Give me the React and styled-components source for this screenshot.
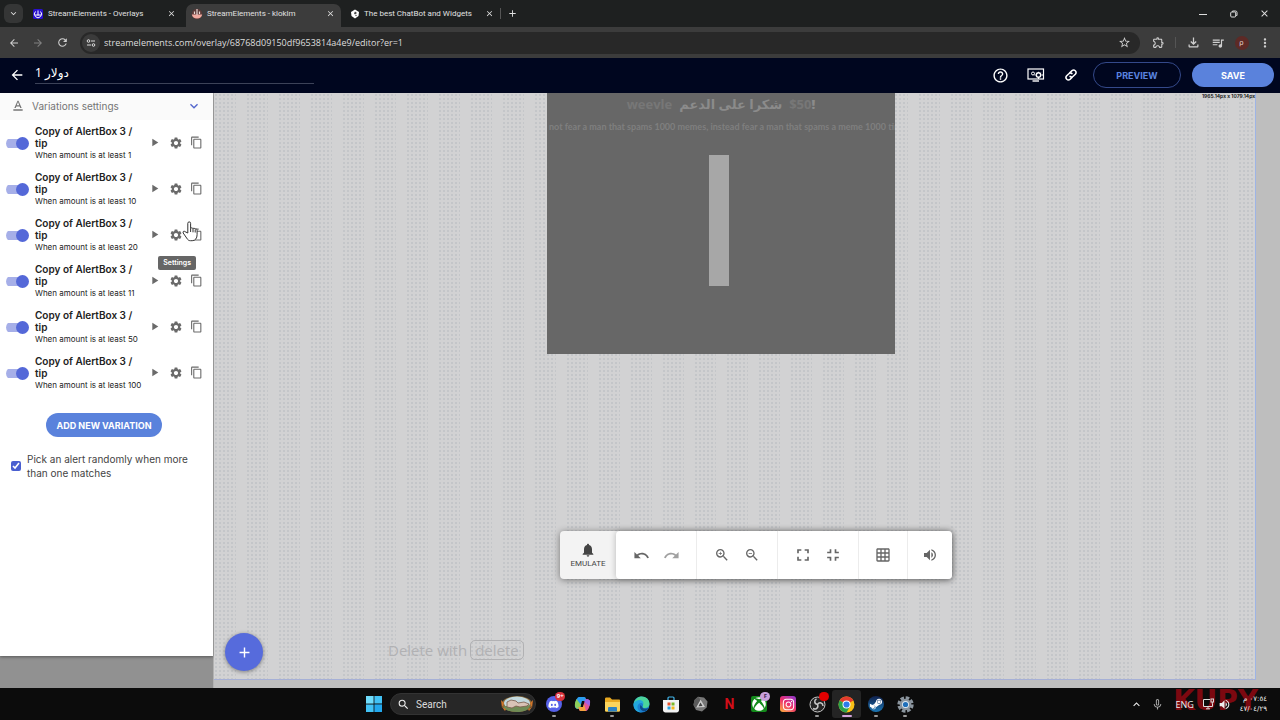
import React from "react";
import styled, { createGlobalStyle, css } from "styled-components";
import {
  MdAdd,
  MdArrowBack,
  MdArrowForward,
  MdClose,
  MdContentCopy,
  MdFullscreen,
  MdFullscreenExit,
  MdGridOn,
  MdHelpOutline,
  MdKeyboardArrowDown,
  MdKeyboardArrowUp,
  MdMicNone,
  MdMoreVert,
  MdNotifications,
  MdOutlineExtension,
  MdOutlineFileDownload,
  MdPlayArrow,
  MdQueueMusic,
  MdRedo,
  MdRefresh,
  MdSearch,
  MdSettings,
  MdStarBorder,
  MdTextFormat,
  MdUndo,
  MdVolumeUp,
  MdZoomIn,
  MdZoomOut,
} from "react-icons/md";
import { FaDiscord, FaInstagram, FaSteamSymbol, FaXbox } from "react-icons/fa";

// Styles

const GlobalStyle = createGlobalStyle`
  * {
    box-sizing: border-box;
  }

  body {
    margin: 0;
    font-family: Inter, "Noto Sans", sans-serif;
    background: #0c0c0c;
  }

  button,
  input {
    margin: 0;
    padding: 0;
    border: 0;
    background: none;
    font: inherit;
    color: inherit;
  }
`;

const Page = styled.div`
  display: flex;
  flex-direction: column;
  min-height: 100vh;
`;

const IconButton = styled.button`
  display: flex;
  flex: none;
  align-items: center;
  justify-content: center;
  width: ${(props) => props.$w || 24}px;
  height: ${(props) => props.$h || 20}px;
  color: ${(props) => props.$color || "inherit"};
`;

// Browser

const TabStrip = styled.div`
  display: flex;
  align-items: flex-end;
  height: 27px;
  padding: 0 0 0 4px;
  background: #1e2020;
  color: #e0e0e0;
  font-family: Roboto, sans-serif;
`;

const TabSearch = styled(IconButton)`
  align-self: center;
  margin-right: 4px;
  border-radius: 6px;
  background: #353636;
`;

const Tab = styled.div`
  display: flex;
  align-items: center;
  width: 155px;
  height: 23px;
  padding: 0 4px 4px 5px;
  border-radius: 7px 7px 0 0;
  font-size: 8px;
  background: ${(props) => (props.$active ? "#3c3c3c" : "transparent")};

  & + & {
    margin-left: 4px;
  }
`;

const TabTitle = styled.button`
  display: flex;
  flex: 1;
  align-items: center;
  gap: 4px;
  min-width: 0;
  overflow: hidden;
  white-space: nowrap;

  svg {
    flex: none;
  }
`;

const Divider = styled.span`
  width: 1px;
  height: 11px;
  background: #555;
`;

const NewTab = styled.div`
  display: flex;
  align-items: center;
  align-self: center;
`;

const WindowControls = styled.div`
  display: flex;
  align-self: center;
  margin-left: auto;
`;

const Toolbar = styled.div`
  display: flex;
  align-items: center;
  height: 31px;
  padding: 0 3px 0 2px;
  background: #3c3c3c;
  color: #cfcfcf;
`;

const AddressBar = styled.div`
  display: flex;
  flex: 1;
  align-items: center;
  height: 22px;
  margin: 0 6px;
  padding: 0 4px 0 2px;
  border-radius: 11px;
  background: #282828;
`;

const SiteInfo = styled(IconButton)`
  border-radius: 9px;
  background: #3b3b3b;
`;

const Address = styled.input`
  flex: 1;
  padding-left: 4px;
  font-family: "Open Sans", sans-serif;
  font-size: 9px;
  color: #dedede;
`;

const Avatar = styled.span`
  width: 14px;
  height: 14px;
  border-radius: 50%;
  background: #5d2a26;
  color: #e8d6d4;
  font-size: 7px;
  line-height: 14px;
  text-align: center;
`;

// Editor header

const Header = styled.header`
  display: flex;
  align-items: center;
  height: 35px;
  padding: 0 6px 1px 5px;
  background: #00061f;
  color: #fff;
`;

const OverlayName = styled.input`
  width: 279px;
  height: 26px;
  margin-left: 6px;
  padding: 5px 0 1px;
  align-self: flex-start;
  border-bottom: 1px solid #3c4258;
  font-family: "Noto Sans", "DejaVu Sans", sans-serif;
  font-size: 12px;
`;

const HeaderActions = styled.div`
  display: flex;
  align-items: center;
  margin-left: auto;
`;

const PillButton = styled.button`
  display: block;
  height: 24px;
  padding: 0 10px;
  border-radius: 13px;
  background: #5a82dc;
  color: #fff;
  font-size: 9px;
  font-weight: 700;
  text-transform: uppercase;
  white-space: nowrap;

  ${(props) =>
    props.$outlined &&
    css`
      width: 88px;
      height: 26px;
      margin: 0 11px 0 5px;
      border: 1px solid #34498a;
      background: none;
      color: #5b84e0;
    `}

  ${(props) =>
    props.$save &&
    css`
      width: 82px;
    `}
`;

// Sidebar

const Body = styled.div`
  display: flex;
  flex: 1;
`;

const SidebarColumn = styled.aside`
  display: flex;
  width: 214px;
  flex: none;
  padding-bottom: 32px;
  border-right: 1px solid #b2b2b2;
  background: #919191;
`;

const Panel = styled.div`
  flex: 1;
  min-width: 0;
  background: #fff;
  box-shadow: 0 1px 3px rgba(0, 0, 0, 0.4);
`;

const PanelHeader = styled.button`
  display: flex;
  align-items: center;
  width: 100%;
  height: 27px;
  padding: 0 11px 2px 10px;
  background: #fafafa;
  color: #757575;
  font-size: 10px;

  span {
    flex: 1;
    padding-left: 6px;
    text-align: left;
  }
`;

const VariationList = styled.ul`
  display: flex;
  flex-direction: column;
  gap: 9px;
  margin: 0;
  padding: 5px 6px 0;
  list-style: none;
`;

const VariationRow = styled.li`
  position: relative;
  display: flex;
  align-items: center;
`;

const RowButton = styled(IconButton)`
  width: 21px;
  padding-bottom: 2px;
  color: #6a6a6a;
`;

const Toggle = styled.input`
  display: flex;
  align-items: center;
  flex: none;
  width: 23px;
  height: 13px;
  appearance: none;
  background: linear-gradient(#a6afe8, #a6afe8) 0 2px / 19px 9px no-repeat;
  border-radius: 7px;

  &::after {
    content: "";
    width: 13px;
    height: 13px;
    margin-left: auto;
    border-radius: 50%;
    background: #5468d8;
  }
`;

const VariationText = styled.label`
  flex: 1;
  min-width: 0;
  padding-left: 6px;
  color: #222;
  font-size: 10px;
  font-weight: 600;
  line-height: 12px;
  white-space: nowrap;

  small {
    display: block;
    font-size: 8px;
    font-weight: 400;
    line-height: 13px;
  }
`;

const Tooltip = styled.div`
  position: absolute;
  top: 39px;
  right: 11px;
  z-index: 2;
  padding: 0 5px;
  border-radius: 2px;
  background: #666;
  color: #fff;
  font-size: 7px;
  font-weight: 600;
  line-height: 14px;
`;

const Pointer = styled.svg`
  position: absolute;
  top: 4px;
  right: 9px;
  z-index: 3;
`;

const PanelFooter = styled.div`
  display: flex;
  flex-direction: column;
  align-items: center;
  gap: 15px;
  padding: 21px 10px 0 5px;
`;

const RandomPick = styled.label`
  display: flex;
  align-items: center;
  gap: 6px;
  width: 100%;
  padding-left: 6px;
  color: #444;
  font-size: 10px;
  line-height: 14px;

  input {
    flex: none;
    width: 10px;
    height: 10px;
    accent-color: #4a5fd0;
  }
`;

// Canvas

const Workspace = styled.main`
  position: relative;
  display: flex;
  flex: 1;
  padding: 0 24px 8px 0;
  background: #bebebe;
`;

const Artboard = styled.div`
  flex: 1;
  border-right: 1px solid #9db4e6;
  border-bottom: 1px solid #a6b0d6;
  background:
    linear-gradient(90deg, transparent 22px, #d2d2d3 22px) 0 0 / 32px 32px,
    radial-gradient(circle at 2px 2px, #c4c6c9 1px, transparent 1px) 0 0 / 4px
      4px,
    #d2d2d3;
`;

const SizeLabel = styled.span`
  display: block;
  text-align: right;
  color: #111;
  font-size: 5px;
  font-weight: 600;
  line-height: 7px;
`;

const AlertWidget = styled.div`
  position: absolute;
  top: 0;
  left: 333px;
  width: 348px;
  height: 261px;
  overflow: hidden;
  background: #676767;
`;

const AlertTitle = styled.div`
  display: flex;
  justify-content: center;
  gap: 7px;
  color: #777;
  font-family: "Open Sans", "DejaVu Sans", sans-serif;
  font-size: 13px;
  font-weight: 700;
  line-height: 22px;
  white-space: nowrap;

  b {
    color: #8b8b8b;
  }
`;

const AlertMessage = styled.div`
  padding-left: 2px;
  color: #7f7f7f;
  font-family: Lato, sans-serif;
  font-size: 9px;
  font-weight: 700;
  line-height: 24px;
  white-space: nowrap;
`;

const AlertImage = styled.div`
  width: 20px;
  height: 131px;
  margin: 16px 0 0 162px;
  background: #a7a7a7;
`;

const DeleteHint = styled.div`
  position: absolute;
  bottom: 28px;
  left: 174px;
  color: #b1b1b3;
  font-family: "Open Sans", sans-serif;
  font-size: 15px;
  line-height: 20px;

  kbd {
    display: inline-block;
    margin-left: 3px;
    padding: 0 4px;
    border: 1px solid #b1b1b3;
    border-radius: 5px;
    font: inherit;
    line-height: 18px;
  }
`;

const AddWidget = styled.button`
  position: absolute;
  bottom: 17px;
  left: 11px;
  display: flex;
  align-items: center;
  justify-content: center;
  width: 38px;
  height: 38px;
  border-radius: 50%;
  background: #566bdc;
  color: #fff;
  box-shadow: 0 1px 4px rgba(0, 0, 0, 0.4);
`;

const Dock = styled.div`
  position: absolute;
  bottom: 109px;
  left: 346px;
  display: flex;
  height: 48px;
  border-radius: 4px;
  background: #f3f3f3;
  color: #666;
  box-shadow: 0 1px 7px rgba(0, 0, 0, 0.45);
`;

const Emulate = styled.button`
  display: flex;
  flex-direction: column;
  align-items: center;
  justify-content: center;
  gap: 1px;
  width: 56px;
  color: #444;
  font-family: Roboto, sans-serif;
  font-size: 8px;
`;

const DockTools = styled.div`
  display: flex;
  border-radius: 4px;
  background: #fff;
  box-shadow: 0 0 6px rgba(0, 0, 0, 0.25);
`;

const DockGroup = styled.div`
  display: flex;
  align-items: center;
  padding: 0 ${(props) => props.$pad || 10}px;

  & + & {
    border-left: 1px solid #ececec;
  }
`;

// Taskbar

const Taskbar = styled.footer`
  position: relative;
  display: grid;
  grid-template-columns: 1fr auto 1fr;
  align-items: center;
  height: 32px;
  overflow: hidden;
  background: #0c0c0c;
  color: #eee;
  font-family: "Open Sans", "DejaVu Sans", sans-serif;
`;

const TaskbarCenter = styled.div`
  grid-column: 2;
  display: flex;
  align-items: center;
  padding-left: 2px;
`;

const SearchBox = styled.label`
  display: flex;
  align-items: center;
  gap: 6px;
  width: 146px;
  height: 22px;
  margin-left: 4px;
  padding: 0 1px 0 6px;
  border: 1px solid #333;
  border-radius: 11px;
  background: #272727;

  input {
    flex: 1;
    min-width: 0;
    font-family: Roboto, sans-serif;
    font-size: 10px;
  }

  input::placeholder {
    color: #ddd;
    opacity: 1;
  }
`;

const Apps = styled.div`
  display: grid;
  grid-template-columns: repeat(13, 1fr);
  width: 381px;
  margin-left: 3px;
`;

const AppButton = styled.button`
  position: relative;
  display: flex;
  align-items: center;
  justify-content: center;
  height: 28px;
  border-radius: 3px;
  background: ${(props) => (props.$active ? "#242424" : "transparent")};

  &::after {
    content: "";
    position: absolute;
    bottom: 1px;
    width: ${(props) => (props.$active ? 10 : 4)}px;
    height: 2px;
    border-radius: 1px;
    background: ${(props) =>
      props.$active ? "#d3a5dc" : props.$running ? "#999" : "transparent"};
  }
`;

const Badge = styled.span`
  position: absolute;
  top: 2px;
  right: 3px;
  min-width: 10px;
  height: 9px;
  border-radius: 5px;
  background: ${(props) => props.$color};
  color: ${(props) => (props.$dark ? "#402050" : "#fff")};
  font-size: 6px;
  font-weight: 700;
  line-height: 9px;
  text-align: center;
`;

const Tile = styled.span`
  display: flex;
  align-items: center;
  justify-content: center;
  width: 16px;
  height: 16px;
  border-radius: ${(props) => props.$radius || 2}px;
  background: ${(props) => props.$bg};
  color: #fff;
`;

const NetflixMark = styled.span`
  color: #d40d18;
  font-family: "Liberation Sans Narrow", Roboto, sans-serif;
  font-size: 14px;
  font-weight: 700;
`;

const Tray = styled.div`
  position: relative;
  z-index: 0;
  display: flex;
  align-items: center;
  justify-content: flex-end;
  padding-right: 13px;
  font-size: 9px;
`;

const Clock = styled.time`
  margin-left: 7px;
  font-family: "DejaVu Sans", sans-serif;
  font-size: 7px;
  line-height: 10px;
  text-align: right;
`;

const Watermark = styled.span`
  position: absolute;
  top: -7px;
  right: 22px;
  z-index: -1;
  color: #7c0810;
  font-family: "DejaVu Sans", sans-serif;
  font-size: 28px;
  font-weight: 700;
  line-height: 28px;
`;

// Drawings

const SeLogo = ({ red }) => (
  <svg width="12" height="12" viewBox="0 0 12 12">
    {red ? (
      <>
        <circle cx="6" cy="6" r="5.3" fill="#5c3a38" />
        <path d="M.8 6.500h10.400a5.300 5 0 0 1-10.400 0z" fill="#f0aaa0" />
        <path
          d="M6 1v6M3.500 3.500v2.500M8.500 3.500v2.500"
          stroke="#e8d8d5"
          strokeWidth="1.200"
        />
      </>
    ) : (
      <>
        <rect x="1" y="1" width="10" height="10" rx="1.5" fill="#2a10d0" />
        <path
          d="M6 2.500v5M3.500 3.500a3.600 3.600 0 1 0 5 0M3 7h6"
          fill="none"
          stroke="#fff"
          strokeWidth="1"
        />
      </>
    )}
  </svg>
);

const BotLogo = () => (
  <svg width="10" height="10" viewBox="0 0 10 10">
    <path d="M5 .5l4 2.500-.5 4L5 9.500 1.500 7 1 3z" fill="#fff" />
    <path d="M5 2.500L7 4 5 5.500 4 4.500z" fill="#444" />
    <circle cx="6" cy="6.500" r=".7" fill="#444" />
  </svg>
);

const TuneIcon = () => (
  <svg width="10" height="8" viewBox="0 0 10 8" fill="none" stroke="#ddd">
    <circle cx="2.500" cy="2" r="1.300" />
    <path d="M5 2h4M1 6h4" />
    <circle cx="7.500" cy="6" r="1.300" />
  </svg>
);

const RestoreIcon = () => (
  <svg width="8" height="8" viewBox="0 0 8 8" fill="none" stroke="#ddd">
    <rect x=".7" y="2" width="5" height="5" rx="1" />
    <path d="M2.500 1.800V1h3a1.500 1.500 0 0 1 1.500 1.500v3h-.8" />
  </svg>
);

const MonitorIcon = () => (
  <svg width="18" height="14" viewBox="0 0 18 14" fill="none" stroke="#fff">
    <rect x="1" y="1" width="15.500" height="10" strokeWidth="1.200" />
    <path d="M5.500 13h6.500" strokeWidth="1.400" />
    <circle cx="6" cy="5.500" r="1.500" />
    <circle cx="11.500" cy="7" r="2.200" strokeWidth="1.400" />
    <path d="M11.500 3.800v1M11.500 9v2M8.500 7h-1M14.500 7h1.500M9.300 4.800l.7.700M13.700 4.800l-.7.700" />
  </svg>
);

const LinkIcon = () => (
  <svg
    width="14"
    height="14"
    viewBox="0 0 14 14"
    fill="none"
    stroke="#fff"
    strokeWidth="1.500"
    strokeLinecap="round"
  >
    <path d="M6 4.500L8 2.600a2.500 2.500 0 0 1 3.500 3.500L9.200 8.300a2.300 2.300 0 0 1-3.200.1" />
    <path d="M8 9.500l-2 1.900a2.500 2.500 0 0 1-3.500-3.500l2.300-2.200a2.300 2.300 0 0 1 3.200-.1" />
  </svg>
);

const HandPointer = () => (
  <Pointer width="16" height="21" viewBox="0 0 16 21">
    <path
      d="M5.800 12V2.300a1.400 1.400 0 0 1 2.800 0v5.200c.3-1 2.200-.9 2.400.3.500-.9 2-.6 2.200.5.700-.6 1.900-.1 1.900 1v4.400c0 3.400-1.700 6-4.900 6H8.500c-1.800 0-2.800-.9-3.800-2.600L1.200 12c-.8-1.500.9-2.400 1.900-1.300z"
      fill="#fff"
      stroke="#333"
    />
    <path d="M8.600 7.500v3.500M11 8v3.300M13.200 8.800v2.700" stroke="#333" />
  </Pointer>
);

const WindowsLogo = () => (
  <svg width="16" height="16" viewBox="0 0 16 16" fill="#42c2f5">
    <path d="M0 0h7.600v7.600H0z" fill="#6fdcfb" />
    <path d="M8.400 0H16v7.600H8.400zM0 8.400h7.600V16H0z" />
    <path d="M8.400 8.400H16V16H8.400z" fill="#22a8ee" />
  </svg>
);

const SearchArt = () => (
  <svg width="34" height="18" viewBox="0 0 34 18">
    <ellipse cx="17" cy="9" rx="15" ry="8" fill="#8a6a3a" />
    <ellipse cx="17" cy="8" rx="13" ry="6.500" fill="#c3d9de" />
    <path
      d="M3 12c5-2 8 0 12-1s9 0 15-1c-1 5-6 7-13 7S5 15 3 12z"
      fill="#6f8b55"
    />
    <path
      d="M7 12V7l4-2 5 1 2 2 6-1 5 2-2 2-7 1-4-1-4 2z"
      fill="#d9c3b6"
      stroke="#7a5a4a"
      strokeWidth=".8"
    />
    <path
      d="M1 5l3 3-2 5zM33 5l-3 3 2 5zM2 12l4 2-1 2zM32 12l-4 2 1 2z"
      fill="#d2762a"
    />
  </svg>
);

const CopilotLogo = () => (
  <svg width="17" height="16" viewBox="0 0 17 16">
    <path
      d="M5 1h5c2 0 2 2 2.500 4H8L6 12c-.5 1.500-4.500 1-5-1C.5 8 2.500 1 5 1z"
      fill="#2b9df0"
    />
    <path
      d="M1 10c-.5-2 .5-5 1.500-7L7 9l-1 3c-1 1.500-4.500 1-5-2z"
      fill="#8ed05a"
    />
    <path
      d="M12 15H7c-2 0-2-2-2.500-4H9l2-7c.5-1.500 4.500-1 5 1 .5 3-1.500 10-4 10z"
      fill="#e0559b"
    />
    <path d="M12 15H7c-2 0-2-2-2.500-4H9l1-3z" fill="#f3a13c" />
    <path
      d="M11 4c.5-1.500 4.500-1 5 1 .2 1 0 3-.5 5L10.500 6z"
      fill="#9a63e8"
    />
  </svg>
);

const FolderLogo = () => (
  <svg width="17" height="15" viewBox="0 0 17 15">
    <path
      d="M1 2c0-1 .4-1.500 1.400-1.500H6L8 2.500h7c.7 0 1 .5 1 1V13c0 1-.5 1.500-1.500 1.500h-12C1.500 14.500 1 14 1 13z"
      fill="#e9a921"
    />
    <path
      d="M1 5h15v8c0 1-.5 1.500-1.500 1.500h-12C1.500 14.500 1 14 1 13z"
      fill="#fbd45c"
    />
    <path
      d="M4 14.500v-3.300c0-.7.400-1.200 1.200-1.200h6.600c.8 0 1.200.5 1.200 1.200v3.300z"
      fill="#2b82c4"
    />
  </svg>
);

const EdgeLogo = () => (
  <svg width="17" height="17" viewBox="0 0 17 17">
    <circle cx="8.500" cy="8.500" r="8" fill="#1a7fd0" />
    <path
      d="M.5 8C1.500 3 5 .5 8.700.5c4.500 0 7.800 3.300 7.800 7 0 3-2 4.500-4.500 4.500-2 0-2.800-.8-2.200-1.800C11 8 9 5.500 6 5.500S1 7 .5 8z"
      fill="#4bd49b"
    />
    <path
      d="M.5 8C1.500 5.500 4 4 6.500 4c3 0 4.500 2.300 3.800 4.500C9 6 5 7 4.500 10.500c-.3 3 2 5.500 4.500 6C4 17 0 13 .5 8z"
      fill="#22a6dc"
    />
    <path
      d="M9.300 11c0 1.500 2.500 2.500 6 1-.5 1.200-1.500 2.500-2.800 3.300C8 15.500 6 12 7.500 9z"
      fill="#0c4a88"
    />
  </svg>
);

const StoreLogo = () => (
  <svg width="16" height="17" viewBox="0 0 16 17">
    <path
      d="M5 4V2c0-.6.400-1 1-1h4c.6 0 1 .4 1 1v2"
      fill="none"
      stroke="#42b5ea"
      strokeWidth="1.200"
    />
    <path
      d="M0 4h16v10c0 1.500-1 2.500-2.500 2.500h-11C1 16.500 0 15.500 0 14z"
      fill="#f2f2f2"
    />
    <path d="M4.500 6.500h3v3h-3z" fill="#e6512a" />
    <path d="M8.500 6.500h3v3h-3z" fill="#7cb829" />
    <path d="M4.500 10.500h3v3h-3z" fill="#28a2e0" />
    <path d="M8.500 10.500h3v3h-3z" fill="#f4b61c" />
  </svg>
);

const CubeLogo = () => (
  <svg width="15" height="16" viewBox="0 0 15 16">
    <path d="M5 .8l6 .7 3.500 4-.8 6L9 15.500 3 14 .5 9 1.500 4z" fill="#777" />
    <path d="M7.500 3.500L12 11 3 11.500z" fill="#ccc" />
    <path d="M7.500 6.500L9.500 10l-4 .3z" fill="#444" />
    <path d="M5 .8L7.500 3.500 3 11.500.5 9 1.500 4z" fill="#5b5b5b" />
  </svg>
);

const ObsLogo = () => (
  <svg width="17" height="17" viewBox="0 0 17 17" fill="none" stroke="#c8c8c8">
    <circle cx="8.500" cy="8.500" r="7.500" fill="#252525" />
    <path
      d="M8.500 8.500C5 8 5 4 7.500 3M8.500 8.500c2-3 5.500-1.500 5.500 1.500M8.500 8.500C10 12 6.500 14 4 12.500"
      strokeWidth="1.500"
    />
  </svg>
);

const ChromeLogo = () => (
  <svg width="17" height="17" viewBox="0 0 17 17">
    <circle cx="8.500" cy="8.500" r="8" fill="#fbc116" />
    <path d="M8.500 8.500L1.600 4.500a8 8 0 0 1 13.800 0z" fill="#e33b2e" />
    <path
      d="M8.500 8.500L1.600 4.500A8 8 0 0 0 8.500 16.500l3.500-6z"
      fill="#2ba24c"
    />
    <circle cx="8.500" cy="8.500" r="4" fill="#fff" />
    <circle cx="8.500" cy="8.500" r="3.100" fill="#2e7bea" />
  </svg>
);

const GearLogo = () => (
  <svg width="17" height="17" viewBox="0 0 17 17">
    <circle
      cx="8.500"
      cy="8.500"
      r="6.700"
      fill="none"
      stroke="#8b959e"
      strokeWidth="3"
      strokeDasharray="3.600 1.660"
    />
    <circle cx="8.500" cy="8.500" r="5.800" fill="#8b959e" />
    <circle cx="8.500" cy="8.500" r="3.500" fill="#dce9f4" />
    <circle cx="8.500" cy="8.500" r="2.600" fill="#1f6fba" />
  </svg>
);

const NetworkIcon = () => (
  <svg width="13" height="12" viewBox="0 0 13 12" fill="none" stroke="#ddd">
    <path d="M8 1.500H1.500v7h9V6M4 10.800h4M6 8.500v2" />
    <rect x="9" y="1" width="2.500" height="3" />
    <path d="M10.300 4v2" />
  </svg>
);

const variations = [
  { id: "v1", amount: 1 },
  { id: "v2", amount: 10 },
  { id: "v3", amount: 20, hovered: true },
  { id: "v4", amount: 11 },
  { id: "v5", amount: 50 },
  { id: "v6", amount: 100 },
];

const Variation = ({ id, amount, hovered }) => (
  <VariationRow>
    <Toggle id={id} type="checkbox" defaultChecked />
    <VariationText htmlFor={id}>
      Copy of AlertBox 3 /<br />
      tip
      <small>When amount is at least {amount}</small>
    </VariationText>
    <RowButton aria-label="Play">
      <MdPlayArrow size={13} />
    </RowButton>
    <RowButton aria-label="Settings">
      <MdSettings size={14} />
    </RowButton>
    <RowButton aria-label="Copy">
      <MdContentCopy size={13} />
    </RowButton>
    {hovered && <Tooltip role="tooltip">Settings</Tooltip>}
    {hovered && <HandPointer />}
  </VariationRow>
);

class App extends React.Component {
  constructor(props) {
    super(props);
    this.state = {
      name: "دولار 1",
      url: "streamelements.com/overlay/68768d09150df9653814a4e9/editor?er=1",
      random: true,
    };

    this.handleChange = this.handleChange.bind(this);
  }

  handleChange(event) {
    const { name, type, checked, value } = event.target;
    this.setState({ [name]: type === "checkbox" ? checked : value });
  }

  renderBrowser() {
    return (
      <>
        <TabStrip>
          <TabSearch $w={19} $h={19} aria-label="Search tabs">
            <MdKeyboardArrowDown size={11} />
          </TabSearch>
          <Tab>
            <TabTitle>
              <SeLogo />
              StreamElements - Overlays
            </TabTitle>
            <IconButton $w={14} aria-label="Close tab">
              <MdClose size={9} />
            </IconButton>
          </Tab>
          <Tab $active>
            <TabTitle>
              <SeLogo red />
              StreamElements - kloklm
            </TabTitle>
            <IconButton $w={14} aria-label="Close tab">
              <MdClose size={9} />
            </IconButton>
          </Tab>
          <Tab>
            <TabTitle>
              <BotLogo />
              The best ChatBot and Widgets
            </TabTitle>
            <IconButton $w={14} aria-label="Close tab">
              <MdClose size={9} />
            </IconButton>
          </Tab>
          <NewTab>
            <Divider />
            <IconButton $w={22} aria-label="New tab">
              <MdAdd size={11} />
            </IconButton>
          </NewTab>
          <WindowControls>
            <IconButton $w={31} aria-label="Minimize">
              <svg width="8" height="8" stroke="#ddd">
                <path d="M0 4.500h8" />
              </svg>
            </IconButton>
            <IconButton $w={31} aria-label="Restore">
              <RestoreIcon />
            </IconButton>
            <IconButton $w={31} aria-label="Close">
              <MdClose size={11} />
            </IconButton>
          </WindowControls>
        </TabStrip>
        <Toolbar>
          <IconButton aria-label="Back">
            <MdArrowBack size={12} />
          </IconButton>
          <IconButton $color="#808080" aria-label="Forward">
            <MdArrowForward size={12} />
          </IconButton>
          <IconButton aria-label="Reload">
            <MdRefresh size={13} />
          </IconButton>
          <AddressBar>
            <SiteInfo $w={18} $h={18} aria-label="Site information">
              <TuneIcon />
            </SiteInfo>
            <Address
              name="url"
              aria-label="Address"
              value={this.state.url}
              onChange={this.handleChange}
            />
            <IconButton aria-label="Bookmark">
              <MdStarBorder size={13} />
            </IconButton>
          </AddressBar>
          <IconButton aria-label="Extensions">
            <MdOutlineExtension size={13} />
          </IconButton>
          <IconButton as="span" $w={10}>
            <Divider />
          </IconButton>
          <IconButton $w={26} aria-label="Downloads">
            <MdOutlineFileDownload size={15} />
          </IconButton>
          <IconButton aria-label="Media">
            <MdQueueMusic size={14} />
          </IconButton>
          <IconButton $w={23} aria-label="Profile">
            <Avatar>ρ</Avatar>
          </IconButton>
          <IconButton aria-label="Menu">
            <MdMoreVert size={14} />
          </IconButton>
        </Toolbar>
      </>
    );
  }

  renderHeader() {
    return (
      <Header>
        <IconButton aria-label="Back to overlays">
          <MdArrowBack size={16} />
        </IconButton>
        <OverlayName
          name="name"
          aria-label="Overlay name"
          value={this.state.name}
          onChange={this.handleChange}
        />
        <HeaderActions>
          <IconButton $w={35} aria-label="Help">
            <MdHelpOutline size={17} />
          </IconButton>
          <IconButton $w={35} aria-label="Resolution">
            <MonitorIcon />
          </IconButton>
          <IconButton $w={35} aria-label="Copy link">
            <LinkIcon />
          </IconButton>
          <PillButton $outlined>Preview</PillButton>
          <PillButton $save>Save</PillButton>
        </HeaderActions>
      </Header>
    );
  }

  renderSidebar() {
    return (
      <SidebarColumn>
        <Panel>
          <PanelHeader>
            <MdTextFormat size={16} />
            <span>Variations settings</span>
            <MdKeyboardArrowDown size={16} color="#5366cc" />
          </PanelHeader>
          <VariationList>
            {variations.map((item) => (
              <Variation key={item.id} {...item} />
            ))}
          </VariationList>
          <PanelFooter>
            <PillButton>Add new variation</PillButton>
            <RandomPick>
              <input
                name="random"
                type="checkbox"
                checked={this.state.random}
                onChange={this.handleChange}
              />
              Pick an alert randomly when more than one matches
            </RandomPick>
          </PanelFooter>
        </Panel>
      </SidebarColumn>
    );
  }

  renderWorkspace() {
    return (
      <Workspace>
        <Artboard>
          <SizeLabel>1965.14px x 1079.14px</SizeLabel>
        </Artboard>
        <AlertWidget>
          <AlertTitle>
            <span>weevle</span>
            <b>شكرا على الدعم</b>
            <span>
              $50<b>!</b>
            </span>
          </AlertTitle>
          <AlertMessage>
            not fear a man that spams 1000 memes, instead fear a man that spams
            a meme 1000 times
          </AlertMessage>
          <AlertImage />
        </AlertWidget>
        <DeleteHint>
          Delete with
          <kbd>delete</kbd>
        </DeleteHint>
        <AddWidget aria-label="Add widget">
          <MdAdd size={17} />
        </AddWidget>
        <Dock>
          <Emulate>
            <MdNotifications size={16} />
            EMULATE
          </Emulate>
          <DockTools>
            <DockGroup>
              <IconButton $w={30} aria-label="Undo">
                <MdUndo size={17} />
              </IconButton>
              <IconButton $w={30} $color="#a0a0a0" aria-label="Redo">
                <MdRedo size={17} />
              </IconButton>
            </DockGroup>
            <DockGroup>
              <IconButton $w={30} aria-label="Zoom in">
                <MdZoomIn size={16} />
              </IconButton>
              <IconButton $w={30} aria-label="Zoom out">
                <MdZoomOut size={16} />
              </IconButton>
            </DockGroup>
            <DockGroup>
              <IconButton $w={30} aria-label="Full screen">
                <MdFullscreen size={20} />
              </IconButton>
              <IconButton $w={30} aria-label="Fit to screen">
                <MdFullscreenExit size={20} />
              </IconButton>
            </DockGroup>
            <DockGroup>
              <IconButton $w={28} aria-label="Grid">
                <MdGridOn size={16} />
              </IconButton>
            </DockGroup>
            <DockGroup $pad={8}>
              <IconButton $w={28} aria-label="Sound">
                <MdVolumeUp size={16} />
              </IconButton>
            </DockGroup>
          </DockTools>
        </Dock>
      </Workspace>
    );
  }

  renderTaskbar() {
    return (
      <Taskbar>
        <TaskbarCenter>
          <IconButton aria-label="Start">
            <WindowsLogo />
          </IconButton>
          <SearchBox>
            <MdSearch size={13} />
            <input placeholder="Search" aria-label="Search" />
            <SearchArt />
          </SearchBox>
          <Apps>
            <AppButton $running aria-label="Discord">
              <Tile $bg="#5661e8" $radius={8}>
                <FaDiscord size={11} />
              </Tile>
              <Badge $color="#d8323c">9+</Badge>
            </AppButton>
            <AppButton aria-label="Copilot">
              <CopilotLogo />
            </AppButton>
            <AppButton $running aria-label="File Explorer">
              <FolderLogo />
            </AppButton>
            <AppButton aria-label="Edge">
              <EdgeLogo />
            </AppButton>
            <AppButton aria-label="Store">
              <StoreLogo />
            </AppButton>
            <AppButton aria-label="Cube">
              <CubeLogo />
            </AppButton>
            <AppButton aria-label="Netflix">
              <NetflixMark>N</NetflixMark>
            </AppButton>
            <AppButton aria-label="Xbox">
              <Tile $bg="#138a1b">
                <FaXbox size={14} />
              </Tile>
              <Badge $color="#c9a0dc" $dark>
                F
              </Badge>
            </AppButton>
            <AppButton aria-label="Instagram">
              <Tile
                $radius={3}
                $bg="linear-gradient(35deg, #fdb53c, #ee2f6c 50%, #8a3ad6)"
              >
                <FaInstagram size={13} />
              </Tile>
            </AppButton>
            <AppButton $running aria-label="OBS">
              <ObsLogo />
              <Badge $color="#e00000" />
            </AppButton>
            <AppButton $active aria-label="Chrome">
              <ChromeLogo />
            </AppButton>
            <AppButton $running aria-label="Steam">
              <Tile $radius={8} $bg="linear-gradient(#10204c, #1a76b4)">
                <FaSteamSymbol size={14} />
              </Tile>
            </AppButton>
            <AppButton $running aria-label="Windows Settings">
              <GearLogo />
            </AppButton>
          </Apps>
        </TaskbarCenter>
        <Tray>
          <Watermark>KUPY</Watermark>
          <IconButton $w={20} aria-label="Hidden icons">
            <MdKeyboardArrowUp size={13} />
          </IconButton>
          <IconButton $w={22} $color="#aaa" aria-label="Microphone">
            <MdMicNone size={13} />
          </IconButton>
          <IconButton $w={32} aria-label="Language">
            ENG
          </IconButton>
          <IconButton $w={16} aria-label="Network">
            <NetworkIcon />
          </IconButton>
          <IconButton $w={16} aria-label="Volume">
            <MdVolumeUp size={13} />
          </IconButton>
          <Clock>
            ٠٧:٥٤ م
            <br />
            ٤٧/٠٤/٢٩
          </Clock>
        </Tray>
      </Taskbar>
    );
  }

  render() {
    return (
      <Page>
        <GlobalStyle />
        {this.renderBrowser()}
        {this.renderHeader()}
        <Body>
          {this.renderSidebar()}
          {this.renderWorkspace()}
        </Body>
        {this.renderTaskbar()}
      </Page>
    );
  }
}

export default App;
